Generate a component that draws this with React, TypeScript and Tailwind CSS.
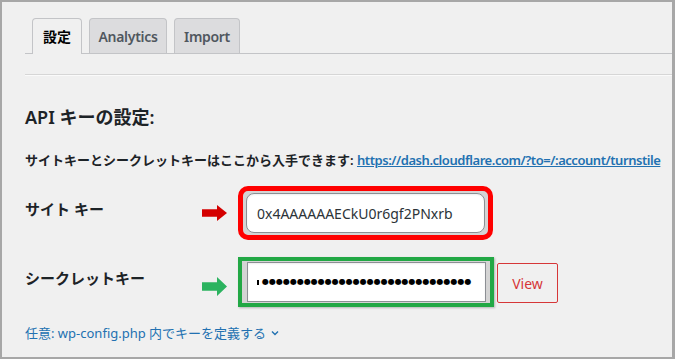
import React from "react";

const font = { fontFamily: '"Noto Sans", "Noto Sans CJK JP", sans-serif' };

const Arrow = ({ color, h }: { color: string; h: number }) => (
  <svg width="25" height={h} viewBox={`0 0 25 ${h}`}>
    <path
      d={`M0 ${h * 0.27} H15 V0 L25 ${h / 2} L15 ${h} V${h * 0.73} H0 Z`}
      fill={color}
    />
  </svg>
);

const tabs = [
  { label: "設定", w: "w-[50px]", active: true },
  { label: "Analytics", w: "w-[78px]", active: false },
  { label: "Import", w: "w-[66px]", active: false },
];

export default function App() {
  const dots = "●".repeat(30);
  return (
    <div
      className="w-[675px] h-[359px] bg-[#f0f0f0] border-2 border-r-[3px] border-[#a7a7a7] overflow-hidden text-[#1d2327]"
      style={font}
    >
      {/* tabs */}
      <div className="ml-[23px] mt-[16px] pl-[7px] flex gap-[7px] border-b border-[#c3c4c7] h-[36px]">
        {tabs.map((t) => (
          <div
            key={t.label}
            className={
              t.active
                ? `${t.w} h-[36px] flex items-center justify-center rounded-t-[4px] border border-b-0 border-[#c3c4c7] bg-[#f0f0f0] text-[14px] font-semibold text-black`
                : `${t.w} h-[35px] flex items-center justify-center rounded-t-[4px] border border-b-0 border-[#c3c4c7] bg-[#dcdcde] text-[14px] font-semibold tracking-[-0.3px] text-[#50575e]`
            }
          >
            {t.label}
          </div>
        ))}
      </div>
      <div className="ml-[23px] mt-[20px] border-t border-[#d6d6d6] border-b border-b-[#fafafa]" />

      <div className="pl-[23px]">
        <h2 className="mt-[29px] text-[18px] leading-[24px] font-semibold">API キーの設定:</h2>
        <p className="mt-[21px] text-[13px] leading-[20px] font-semibold whitespace-nowrap">
          サイトキーとシークレットキーはここから入手できます:{" "}
          <a className="text-[#2271b1] underline tracking-[-0.45px]" href="#">
            https://dash.cloudflare.com/?to=/:account/turnstile
          </a>
        </p>

        {/* site key */}
        <div className="mt-[16px] flex items-start">
          <div className="w-[177px] mt-[13px] text-[15px] leading-[20px] font-bold">サイト キー</div>
          <div className="mt-[19px]">
            <Arrow color="#d40000" h={16} />
          </div>
          <div className="ml-[11px] w-[255px] h-[54px] border-[5px] border-[#ff0000] rounded-[10px] bg-[#d4d4d4] px-[3px] py-[2px]">
            <div className="h-[40px] bg-white border border-[#8c8f94] rounded-[8px] flex items-center pl-[10px] text-[14px] text-[#2c3338] shadow-[inset_0_1px_2px_rgba(0,0,0,0.07)]">
              0x4AAAAAAECkU0r6gf2PNxrb
            </div>
          </div>
        </div>

        {/* secret key */}
        <div className="mt-[17px] flex items-start">
          <div className="w-[177px] mt-[11px] text-[15px] leading-[20px] font-bold">シークレットキー</div>
          <div className="mt-[20px]">
            <Arrow color="#2bb35f" h={19} />
          </div>
          <div className="ml-[11px] w-[256px] h-[50px] border-[4px] border-[#22a845] bg-[#d4d4d4] pl-[5px] pr-[4px] py-[1px] shadow-[1px_1px_2px_rgba(0,0,0,0.25)]">
            <div className="h-[40px] bg-white border border-[#8c8f94] flex items-center pl-[9px] overflow-hidden whitespace-nowrap shadow-[inset_0_1px_2px_rgba(0,0,0,0.07)]">
              <span className="w-[2px] h-[5px] bg-black mr-[3px]" />
              <span className="text-[8px] tracking-[0px] text-black" style={{ fontFamily: '"DejaVu Sans", sans-serif' }}>
                {dots}
              </span>
            </div>
          </div>
          <button className="ml-[3px] mt-[6px] w-[61px] h-[40px] border border-[#d63638] rounded-[2px] text-[14px] text-[#d63638] bg-[#f0f0f0]">
            View
          </button>
        </div>

        <div className="mt-[16px] flex items-center text-[13px] leading-[20px] text-[#2271b1]">
          任意: wp-config.php 内でキーを定義する
          <svg className="ml-[5px]" width="8" height="6" viewBox="0 0 8 6">
            <path d="M1 1.5 L4 4.5 L7 1.5" stroke="#2271b1" strokeWidth="1.4" fill="none" />
          </svg>
        </div>
      </div>
    </div>
  );
}
